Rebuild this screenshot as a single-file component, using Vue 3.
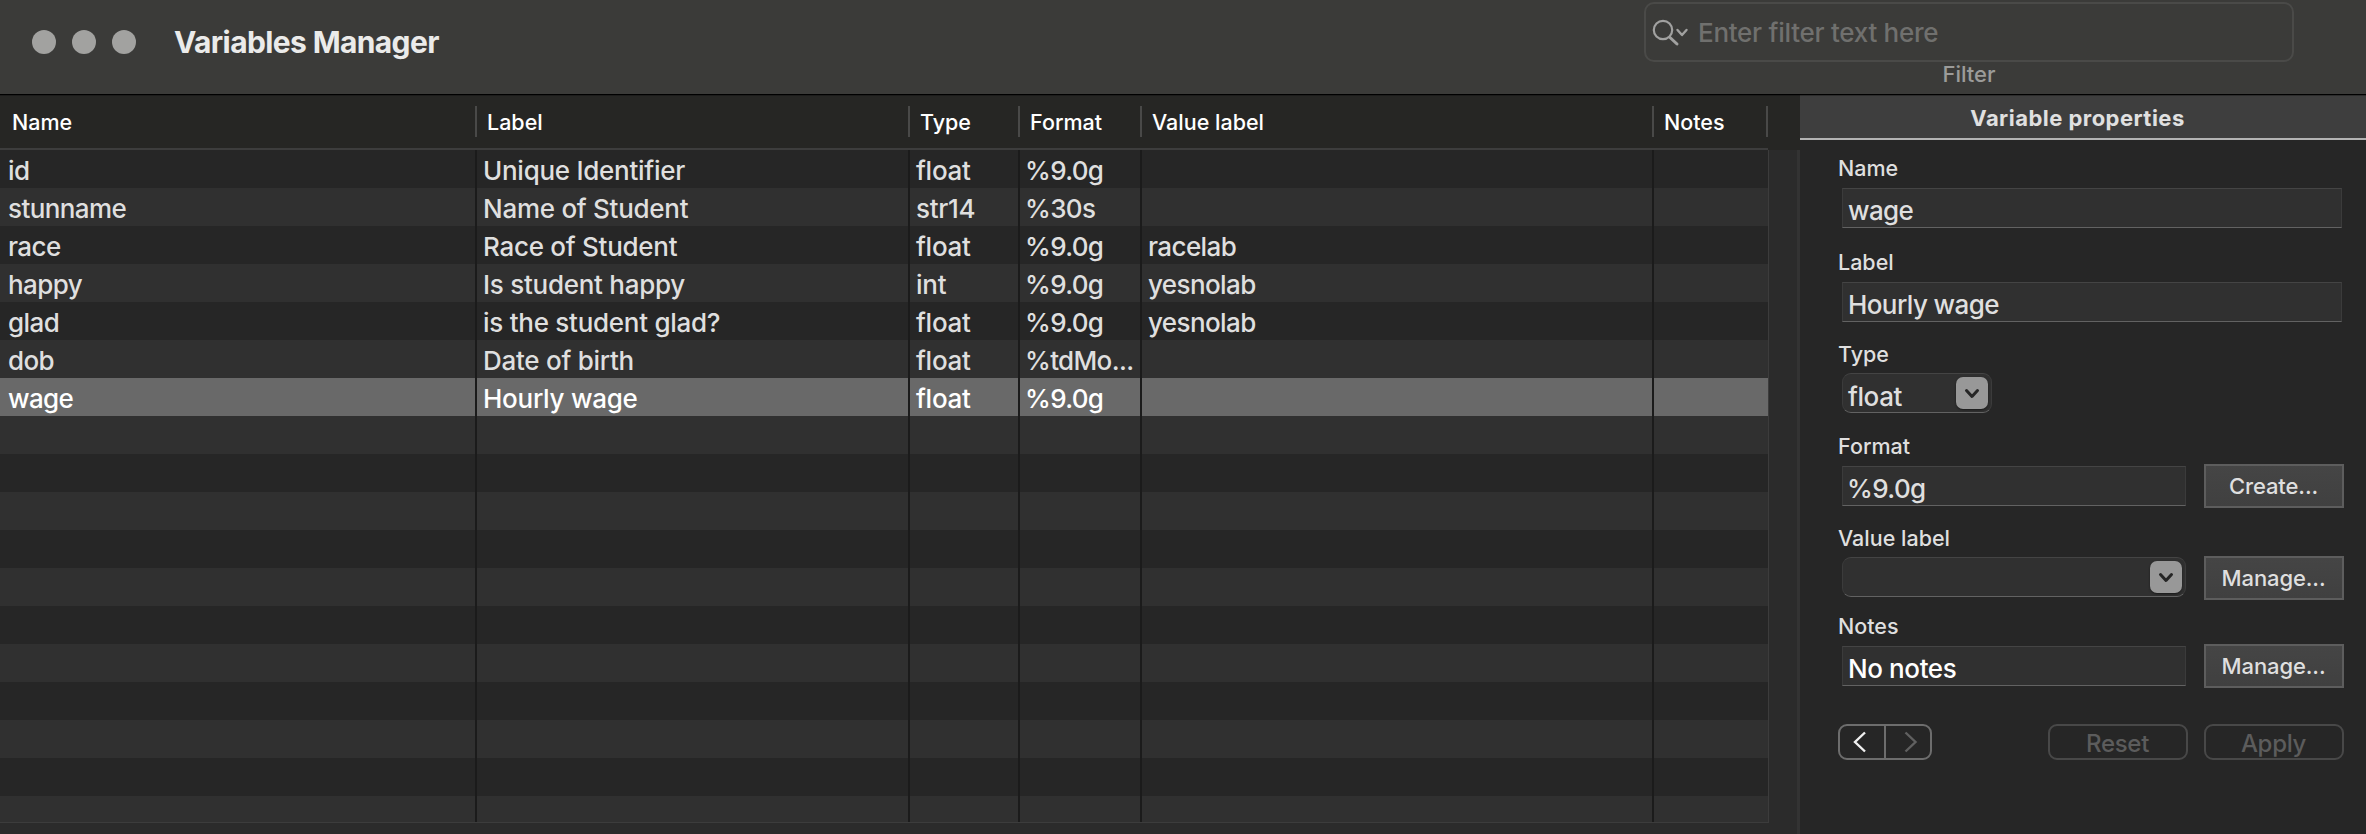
<script setup>
const columns = [
  { key: 'name', title: 'Name' },
  { key: 'label', title: 'Label' },
  { key: 'type', title: 'Type' },
  { key: 'format', title: 'Format' },
  { key: 'valueLabel', title: 'Value label' },
  { key: 'notes', title: 'Notes' },
]
const data = [
  { name: 'id', label: 'Unique Identifier', type: 'float', format: '%9.0g' },
  { name: 'stunname', label: 'Name of Student', type: 'str14', format: '%30s' },
  { name: 'race', label: 'Race of Student', type: 'float', format: '%9.0g', valueLabel: 'racelab' },
  { name: 'happy', label: 'Is student happy', type: 'int', format: '%9.0g', valueLabel: 'yesnolab' },
  { name: 'glad', label: 'is the student glad?', type: 'float', format: '%9.0g', valueLabel: 'yesnolab' },
  { name: 'dob', label: 'Date of birth', type: 'float', format: '%tdMo...' },
  { name: 'wage', label: 'Hourly wage', type: 'float', format: '%9.0g' },
]
const rows = Array.from({ length: 18 }, (_, i) => data[i] ?? {})
const selected = 6
</script>

<template>
  <div class="window">
    <header class="titlebar">
      <div class="lights"><i></i><i></i><i></i></div>
      <h1>Variables Manager</h1>
      <div class="filter">
        <div class="search">
          <svg width="38" height="40" viewBox="0 0 38 40" fill="none" stroke="#a1a1a0" stroke-linecap="round" stroke-linejoin="round">
            <circle cx="11" cy="17" r="9.2" stroke-width="2.2" />
            <path d="M18 24.500 L25 31" stroke-width="3" />
            <path d="M25.500 17 L30 22 L34.500 17" stroke-width="2.4" />
          </svg>
          <span>Enter filter text here</span>
        </div>
        <div class="caption">Filter</div>
      </div>
    </header>

    <main class="body">
      <section class="left">
        <div class="head grid">
          <div v-for="c in columns" :key="c.key" class="th"><span>{{ c.title }}</span></div>
        </div>
        <div class="content">
          <div class="rows">
            <div v-for="(r, i) in rows" :key="i" class="row grid" :class="{ odd: i % 2, selected: i === selected }">
              <div v-for="c in columns" :key="c.key" class="td" :class="c.key">{{ r[c.key] }}</div>
            </div>
          </div>
        </div>
      </section>

      <aside class="panel">
        <h2><span>Variable properties</span></h2>
        <div class="form">
          <div class="field f1">
            <label>Name</label>
            <div class="line"><div class="input">wage</div></div>
          </div>
          <div class="field f2">
            <label>Label</label>
            <div class="line"><div class="input">Hourly wage</div></div>
          </div>
          <div class="field f3">
            <label>Type</label>
            <div class="line">
              <div class="input combo small"><span>float</span>
                <b><svg width="32" height="32" viewBox="0 0 32 32"><path d="M10.5 13.5 L16 19.5 L21.5 13.5" /></svg></b>
              </div>
            </div>
          </div>
          <div class="field f4">
            <label>Format</label>
            <div class="line"><div class="input format">%9.0g</div><button class="push">Create...</button></div>
          </div>
          <div class="field f5">
            <label>Value label</label>
            <div class="line">
              <div class="input combo"><span></span>
                <b><svg width="32" height="32" viewBox="0 0 32 32"><path d="M10.5 13.5 L16 19.5 L21.5 13.5" /></svg></b>
              </div>
              <button class="push">Manage...</button>
            </div>
          </div>
          <div class="field f6">
            <label>Notes</label>
            <div class="line"><div class="input bright">No notes</div><button class="push">Manage...</button></div>
          </div>
          <div class="actions">
            <div class="nav">
              <div><svg width="44" height="32" viewBox="0 0 44 32"><path d="M25 6.500 L15 16 L25 25.500" /></svg></div>
              <div class="off"><svg width="44" height="32" viewBox="0 0 44 32"><path d="M19.500 6.500 L29.500 16 L19.500 25.500" /></svg></div>
            </div>
            <button class="round">Reset</button>
            <button class="round">Apply</button>
          </div>
        </div>
      </aside>
    </main>
  </div>
</template>

<style>
body { margin: 0; background: #2b2b2b; overflow: hidden; }
</style>

<style scoped>
* { box-sizing: border-box; }
.window { width: 2366px; height: 834px; display: flex; flex-direction: column; overflow: hidden; background: #2b2b2b; color: #dfdfdf; font: 450 26px/38px Inter, "Liberation Sans", sans-serif; letter-spacing: -0.27px; white-space: nowrap; }
.titlebar { height: 95px; flex: none; display: flex; background: #3b3b39; border-bottom: 1px solid #000; padding-left: 32px; }
.lights { display: flex; gap: 16px; padding-top: 30px; width: 142px; }
.lights i { width: 24px; height: 24px; border-radius: 50%; background: #a2a2a0; }
h1 { margin: 0; font-size: 30px; line-height: 36px; font-weight: 700; letter-spacing: -0.62px; color: #ebebea; padding-top: 24px; }
.filter { margin-left: auto; margin-right: 72px; width: 650px; padding-top: 2px; }
.search { height: 60px; border: 2px solid #4a4a48; border-radius: 10px; display: flex; align-items: center; padding-left: 6px; color: #70706e; }
.search svg { margin-top: 2px; }
.search span { margin-left: 8px; margin-top: 2px; }
.caption { text-align: center; font-size: 22px; line-height: 24px; font-weight: 500; letter-spacing: 0; color: #9b9b99; }
.body { flex: 1; display: flex; min-height: 0; }
.left { width: 1800px; flex: none; display: flex; flex-direction: column; }
.grid { display: grid; grid-template-columns: 477px 433px 110px 122px 512px 114px; width: 1768px; }
.head { height: 55px; width: 1800px; background: linear-gradient(#3d3d3d, #3d3d3d) 0 100% / 1768px 2px no-repeat #262624; border-top: 1px solid #1c1c1b; padding-top: 10px; }
.th { height: 31px; border-right: 2px solid #494948; color: #fff; font-size: 21.500px; font-weight: 500; letter-spacing: 0; line-height: 32px; padding-left: 10px; }
.th:first-child { padding-left: 12px; }
.content { flex: 1; border-right: 3px solid #333; min-height: 0; }
.rows { height: 673px; width: 1769px; overflow: hidden; border-right: 1px solid #3c3c3c; border-bottom: 1px solid #3c3c3c; }
.row { height: 38px; background: #262626; }
.row.odd { background: #303030; }
.row.selected { background: #696969; color: #fff; }
.td { border-right: 2px solid #1b1b1b; padding: 2px 0 0 6px; }
.td:first-child { padding-left: 8px; }
.td:last-child { border-right: 0; }
.td.name, .td.valueLabel { letter-spacing: -0.6px; }
.td.format { letter-spacing: -0.65px; padding-left: 5px; }
.panel { flex: 1; background: #262626; }
h2 { margin: 0; height: 45px; background: #3e3e3e; border-top: 1px solid #2c2c2c; border-bottom: 2px solid #b3b3b3; text-align: center; font-size: 22px; line-height: 44px; font-weight: 700; letter-spacing: 0.47px; color: #e0e0e0; padding-right: 11px; }
.form { padding: 14px 22px 0 38px; }
.field { height: 94px; }
.f2 { height: 92px; }
.f3 { height: 92px; }
.f4 { height: 92px; }
.f5 { height: 88px; }
.f6 { height: 112px; }
label { display: block; font-size: 21.500px; line-height: 28px; height: 34px; font-weight: 500; letter-spacing: 0; }
.line { display: flex; align-items: center; height: 40px; padding: 0 2px 0 4px; }
.input { flex: 1; height: 40px; background: #303030; border: 1px solid #3b3b3b; border-top-color: #444; border-bottom-color: #626262; padding-left: 5px; line-height: 44px; letter-spacing: -0.6px; }
.input.format { padding-left: 4px; }
.input.bright { color: #fff; letter-spacing: -0.4px; }
.combo { border-radius: 9px; display: flex; justify-content: space-between; padding-right: 3px; margin-bottom: 2px; line-height: 46px; letter-spacing: -0.4px; }
.combo.small { flex: none; width: 150px; }
.combo b { width: 32px; height: 32px; margin-top: 3px; border-radius: 7px; background: #989898; box-shadow: 0 1px 2px #1a1a1a; }
.combo svg { display: block; fill: none; stroke: #252525; stroke-width: 3; stroke-linecap: round; stroke-linejoin: round; }
button { font: inherit; color: #dfdfdf; padding: 0; width: 140px; }
.push { height: 44px; margin: 0 -2px 0 18px; border: 2px solid #5d5d5d; background: linear-gradient(#454545, #404040); font-size: 22px; font-weight: 500; letter-spacing: -0.1px; padding-right: 1px; }
.actions { display: flex; align-items: center; height: 36px; }
.nav { width: 94px; height: 36px; display: flex; border: 2px solid #6d6d6d; border-radius: 9px; margin-right: auto; }
.nav div { flex: 1; }
.nav .off { border-left: 2px solid #6d6d6d; }
.nav svg { display: block; fill: none; stroke: #f0f0f0; stroke-width: 2.4; }
.nav .off svg { stroke: #606060; }
.round { height: 36px; border: 2px solid #484848; border-radius: 9px; background: none; color: #5c5c5c; font-size: 24px; font-weight: 500; line-height: 32px; padding: 2px 1px 0 0; margin-left: 16px; letter-spacing: -0.3px; }
</style>
